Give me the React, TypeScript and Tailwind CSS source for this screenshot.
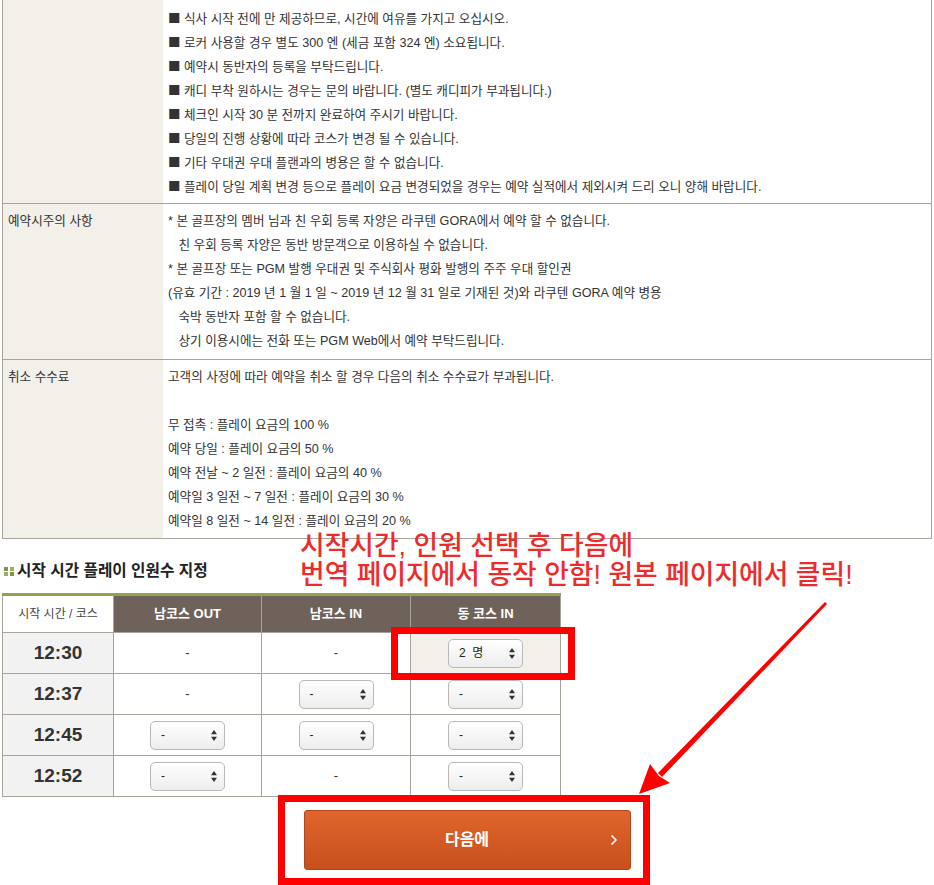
import React from "react";

const FONT = { fontFamily: '"Liberation Sans", "Noto Sans CJK KR", sans-serif' };
const CJK = { fontFamily: '"Noto Sans CJK KR", sans-serif' };

function Sel({ v }: { v: string }) {
  return (
    <div className="mx-auto w-[75px] h-[29px] rounded-[5px] border border-[#b8b8b8] bg-linear-to-b from-white to-[#ededed] flex items-center justify-between pl-[10px] pr-[7px] text-[12px] text-[#222]">
      <span className="whitespace-pre">{v}</span>
      <svg width="6" height="11" viewBox="0 0 6 11">
        <path d="M3 0 L6 4.2 H0Z M3 11 L6 6.8 H0Z" fill="#333" />
      </svg>
    </div>
  );
}

function Line({ l }: { l: string }) {
  if (l.startsWith("■")) {
    return (
      <div className="leading-[24px] h-[24px] whitespace-pre">
        <span style={CJK} className="text-[12.5px]">■</span>
        {l.slice(1)}
      </div>
    );
  }
  return <div className="leading-[24px] h-[24px] whitespace-pre">{l}</div>;
}

function InfoRow({
  label,
  lines,
  cls,
}: {
  label: string;
  lines: string[];
  cls: string;
}) {
  return (
    <div className="flex border-b border-[#a8a39b] last:border-b-0">
      <div className={`w-[160px] shrink-0 bg-[#f3efe9] px-[5px] ${cls}`}>
        <div className="leading-[24px]">{label}</div>
      </div>
      <div className={`flex-1 pl-[5px] ${cls}`}>
        {lines.map((l, i) => (
          <Line key={i} l={l} />
        ))}
      </div>
    </div>
  );
}

export default function App() {
  const r1 = [
    "■ 식사 시작 전에 만 제공하므로, 시간에 여유를 가지고 오십시오.",
    "■ 로커 사용할 경우 별도 300 엔 (세금 포함 324 엔) 소요됩니다.",
    "■ 예약시 동반자의 등록을 부탁드립니다.",
    "■ 캐디 부착 원하시는 경우는 문의 바랍니다. (별도 캐디피가 부과됩니다.)",
    "■ 체크인 시작 30 분 전까지 완료하여 주시기 바랍니다.",
    "■ 당일의 진행 상황에 따라 코스가 변경 될 수 있습니다.",
    "■ 기타 우대권 우대 플랜과의 병용은 할 수 없습니다.",
    "■ 플레이 당일 계획 변경 등으로 플레이 요금 변경되었을 경우는 예약 실적에서 제외시켜 드리 오니 양해 바랍니다.",
  ];
  const r2 = [
    "* 본 골프장의 멤버 님과 친 우회 등록 자양은 라쿠텐 GORA에서 예약 할 수 없습니다.",
    "   친 우회 등록 자양은 동반 방문객으로 이용하실 수 없습니다.",
    "* 본 골프장 또는 PGM 발행 우대권 및 주식회사 평화 발행의 주주 우대 할인권",
    "(유효 기간 : 2019 년 1 월 1 일 ~ 2019 년 12 월 31 일로 기재된 것)와 라쿠텐 GORA 예약 병용",
    "   숙박 동반자 포함 할 수 없습니다.",
    "   상기 이용시에는 전화 또는 PGM Web에서 예약 부탁드립니다.",
  ];
  const r3 = [
    "고객의 사정에 따라 예약을 취소 할 경우 다음의 취소 수수료가 부과됩니다.",
    "",
    "무 접촉 : 플레이 요금의 100 %",
    "예약 당일 : 플레이 요금의 50 %",
    "예약 전날 ~ 2 일전 : 플레이 요금의 40 %",
    "예약일 3 일전 ~ 7 일전 : 플레이 요금의 30 %",
    "예약일 8 일전 ~ 14 일전 : 플레이 요금의 20 %",
  ];

  const rows: { t: string; c: (string | null)[] }[] = [
    { t: "12:30", c: [null, null, "2  명"] },
    { t: "12:37", c: [null, "-", "-"] },
    { t: "12:45", c: ["-", "-", "-"] },
    { t: "12:52", c: ["-", null, "-"] },
  ];

  const bd = "border border-[#a8a39b]";

  return (
    <div
      className="relative w-[934px] h-[885px] overflow-hidden bg-white text-[12.6px] text-[#333]"
      style={FONT}
    >
      {/* info table */}
      <div className="ml-[2px] w-[930px] border-x border-b border-[#a8a39b]">
        <InfoRow label="" lines={r1} cls="pt-[6px] pb-[5px]" />
        <InfoRow label="예약시주의 사항" lines={r2} cls="pt-[5px] pb-[6px]" />
        <InfoRow label="취소 수수료" lines={r3} cls="pt-[5px] pb-[5px]" />
      </div>

      {/* heading */}
      <div className="mt-[22px] ml-[4px] flex items-center gap-[3px] h-[20px]">
        <div className="grid grid-cols-2 gap-[1px] w-[10px]">
          <span className="block w-[4px] h-[4px] bg-[#7d9446]" />
          <span className="block w-[4px] h-[4px] bg-[#9aae62]" />
          <span className="block w-[4px] h-[4px] bg-[#9aae62]" />
          <span className="block w-[4px] h-[4px] bg-[#7d9446]" />
        </div>
        <span className="text-[15.7px] font-bold text-[#222] leading-[20px]">
          시작 시간 플레이 인원수 지정
        </span>
      </div>

      {/* tee time table */}
      <table className="mt-[12px] ml-[2px] border-collapse w-[558px] table-fixed">
        <colgroup>
          <col className="w-[111px]" />
          <col className="w-[148px]" />
          <col className="w-[149px]" />
          <col className="w-[150px]" />
        </colgroup>
        <thead>
          <tr className="h-[38px]">
            <th className={`${bd} border-t-[3px] border-t-[#8fa352] bg-white text-[12px] font-normal text-[#444]`}>
              시작 시간 / 코스
            </th>
            {["남코스 OUT", "남코스 IN", "동 코스 IN"].map((h) => (
              <th
                key={h}
                className={`${bd} border-t-[3px] border-t-[#8fa352] bg-[#6f625a] text-[13px] font-bold text-white`}
              >
                {h}
              </th>
            ))}
          </tr>
        </thead>
        <tbody>
          {rows.map((r, ri) => (
            <tr key={r.t} className="h-[41px]">
              <td className={`${bd} bg-[#f2f2f2] text-center text-[19px] font-bold text-[#333]`}>
                {r.t}
              </td>
              {r.c.map((c, ci) => (
                <td
                  key={ci}
                  className={`${bd} text-center text-[13px] ${
                    ri === 0 && ci === 2 ? "bg-[#f3efe9]" : "bg-white"
                  }`}
                >
                  {c === null ? <span>-</span> : <Sel v={c} />}
                </td>
              ))}
            </tr>
          ))}
        </tbody>
      </table>

      {/* next button */}
      <div className="mt-[13px] flex justify-center">
        <button className="relative w-[327px] h-[60px] rounded-[3px] border border-[#b2461a] bg-linear-to-b from-[#e0652d] to-[#c7501c] text-white text-[16px] font-bold">
          다음에
          <svg
            className="absolute right-[12px] top-1/2 -translate-y-1/2"
            width="8"
            height="12"
            viewBox="0 0 8 12"
          >
            <path d="M1.5 1.5 L6 6 L1.5 10.5" stroke="white" strokeWidth="1.6" fill="none" />
          </svg>
        </button>
      </div>

      {/* annotation overlay */}
      <div className="absolute left-[300px] top-[532px] text-[26.8px] leading-[29px] font-medium text-[#ee2b2b] whitespace-nowrap pointer-events-none">
        <div>시작시간, 인원 선택 후 다음에</div>
        <div>번역 페이지에서 동작 안함! 원본 페이지에서 클릭!</div>
      </div>
      <div className="absolute left-[391px] top-[627px] w-[184px] h-[53px] border-[7px] border-[#ff0000] pointer-events-none" />
      <div className="absolute left-[278px] top-[795px] w-[372px] h-[90px] border-[7px] border-[#ff0000] pointer-events-none" />
      <svg
        className="absolute left-0 top-0 pointer-events-none"
        width="934"
        height="885"
        viewBox="0 0 934 885"
      >
        <polygon points="825,602 827,604 662,777 658,773" fill="#ff0000" />
        <polygon points="639,794 650,764 659,776 670,783" fill="#ff0000" />
      </svg>
    </div>
  );
}
